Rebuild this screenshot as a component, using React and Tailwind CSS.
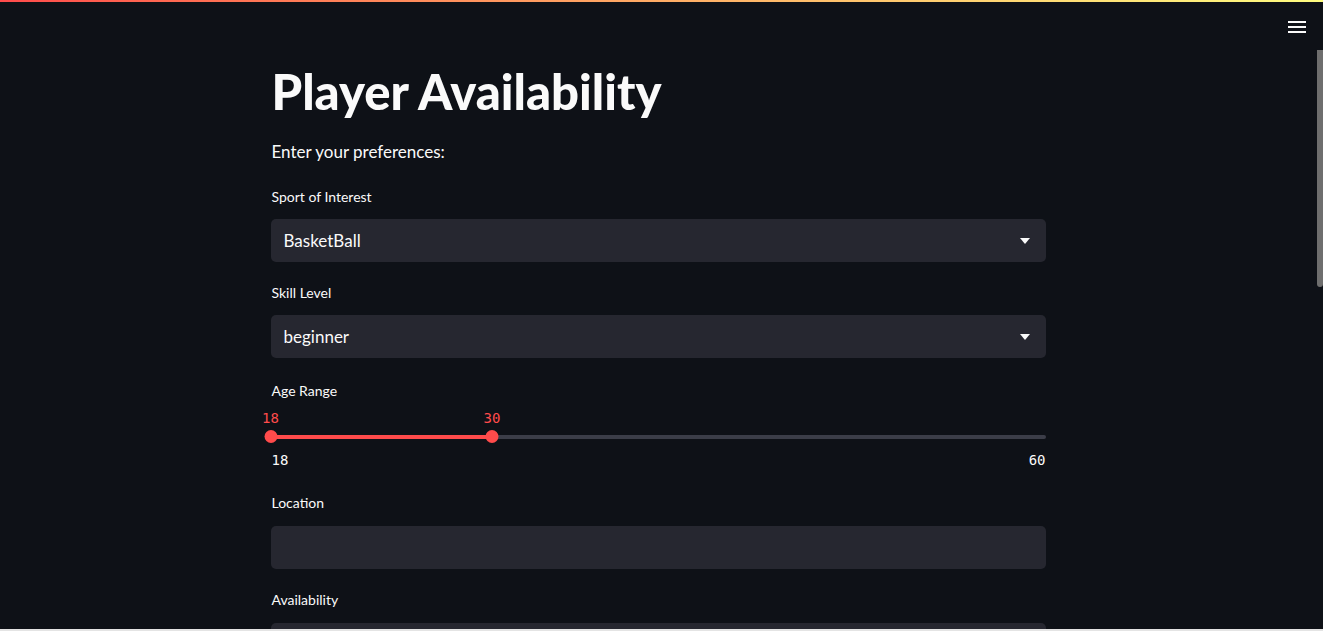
import React from 'react';

const Caret = () => (
  <svg width="10" height="6" viewBox="0 0 10 6" className="text-[#fafafa]">
    <path d="M0 0 L10 0 L5 6 Z" fill="currentColor" />
  </svg>
);

const Label = ({ children, className = '' }) => (
  <div className={`text-[14px] leading-[20px] text-[#fafafa] pl-[1px] ${className}`}>{children}</div>
);

const SelectBox = ({ value }) => (
  <div className="h-[43px] rounded-[5px] bg-[#262730] flex items-center justify-between pl-[13px] pr-[16px]">
    <span className="text-[17px] text-[#fafafa]">{value}</span>
    <Caret />
  </div>
);

const AgeSlider = () => {
  const min = 18;
  const max = 60;
  const lo = 18;
  const hi = 30;
  const pct = (v) => ((v - min) / (max - min)) * 100;
  const mono = { fontFamily: '"DejaVu Sans Mono", "Liberation Mono", monospace' };

  return (
    <div className="mt-[8px]">
      <div className="relative h-[36px]">
        <span className="absolute -top-[1px] -translate-x-1/2 text-[14px] text-[#ff4b4b]" style={{ ...mono, left: `${pct(lo)}%` }}>{lo}</span>
        <span className="absolute -top-[1px] -translate-x-1/2 text-[14px] text-[#ff4b4b]" style={{ ...mono, left: `${pct(hi)}%` }}>{hi}</span>
        <div className="absolute left-0 right-0 top-[26px] h-[4px] rounded-full bg-[#3b3d48]" />
        <div className="absolute top-[26px] h-[4px] bg-[#ff4b4b]" style={{ left: `${pct(lo)}%`, width: `${pct(hi) - pct(lo)}%` }} />
        <div className="absolute top-[21px] w-[13px] h-[13px] -translate-x-1/2 rounded-full bg-[#ff4b4b]" style={{ left: `${pct(lo)}%` }} />
        <div className="absolute top-[21px] w-[13px] h-[13px] -translate-x-1/2 rounded-full bg-[#ff4b4b]" style={{ left: `${pct(hi)}%` }} />
      </div>
      <div className="flex justify-between text-[14px] text-[#fafafa] pt-[5px]" style={mono}>
        <span className="pl-[1px]">{min}</span>
        <span>{max}</span>
      </div>
    </div>
  );
};

export default function App() {
  return (
    <div className="h-[631px] w-full bg-[#0e1117] relative overflow-hidden flex flex-col" style={{ fontFamily: 'Lato, "Noto Sans", sans-serif' }}>
      <div className="h-[2px] w-full bg-gradient-to-r from-[#ff4b4b] to-[#fffd80]" />

      {/* header menu */}
      <button className="absolute top-[20px] right-[17px] text-[#fafafa]">
        <svg width="18" height="14" viewBox="0 0 18 14">
          <rect x="0" y="1" width="18" height="2" fill="currentColor" />
          <rect x="0" y="6" width="18" height="2" fill="currentColor" />
          <rect x="0" y="11" width="18" height="2" fill="currentColor" />
        </svg>
      </button>

      <div className="flex flex-1 min-h-0">
        <div className="flex-1 min-w-0">
          <div className="w-[775px] mx-auto pt-[59px]">
            <h1 className="text-[49px] leading-[60px] font-black text-[#fafafa] pl-[1px]">Player Availability</h1>
            <p className="mt-[19px] text-[17px] leading-[24px] text-[#fafafa] pl-[1px]">Enter your preferences:</p>

            <Label className="mt-[23px]">Sport of Interest</Label>
            <div className="mt-[12px]"><SelectBox value="BasketBall" /></div>

            <Label className="mt-[21px]">Skill Level</Label>
            <div className="mt-[12px]"><SelectBox value="beginner" /></div>

            <Label className="mt-[23px]">Age Range</Label>
            <AgeSlider />

            <Label className="mt-[22px]">Location</Label>
            <div className="mt-[13px] h-[43px] rounded-[5px] bg-[#262730]" />

            <Label className="mt-[21px]">Availability</Label>
            <div className="mt-[13px] h-[43px] rounded-[5px] bg-[#262730]" />
          </div>
        </div>

        {/* scrollbar */}
        <div className="w-[7px] pt-[48px]">
          <div className="h-[237px] w-[6px] ml-[1px] bg-[#6e6e6e] rounded-b-[3px]" />
        </div>
      </div>

      <div className="h-[2px] w-full bg-[#e4e4e4]" />
    </div>
  );
}
